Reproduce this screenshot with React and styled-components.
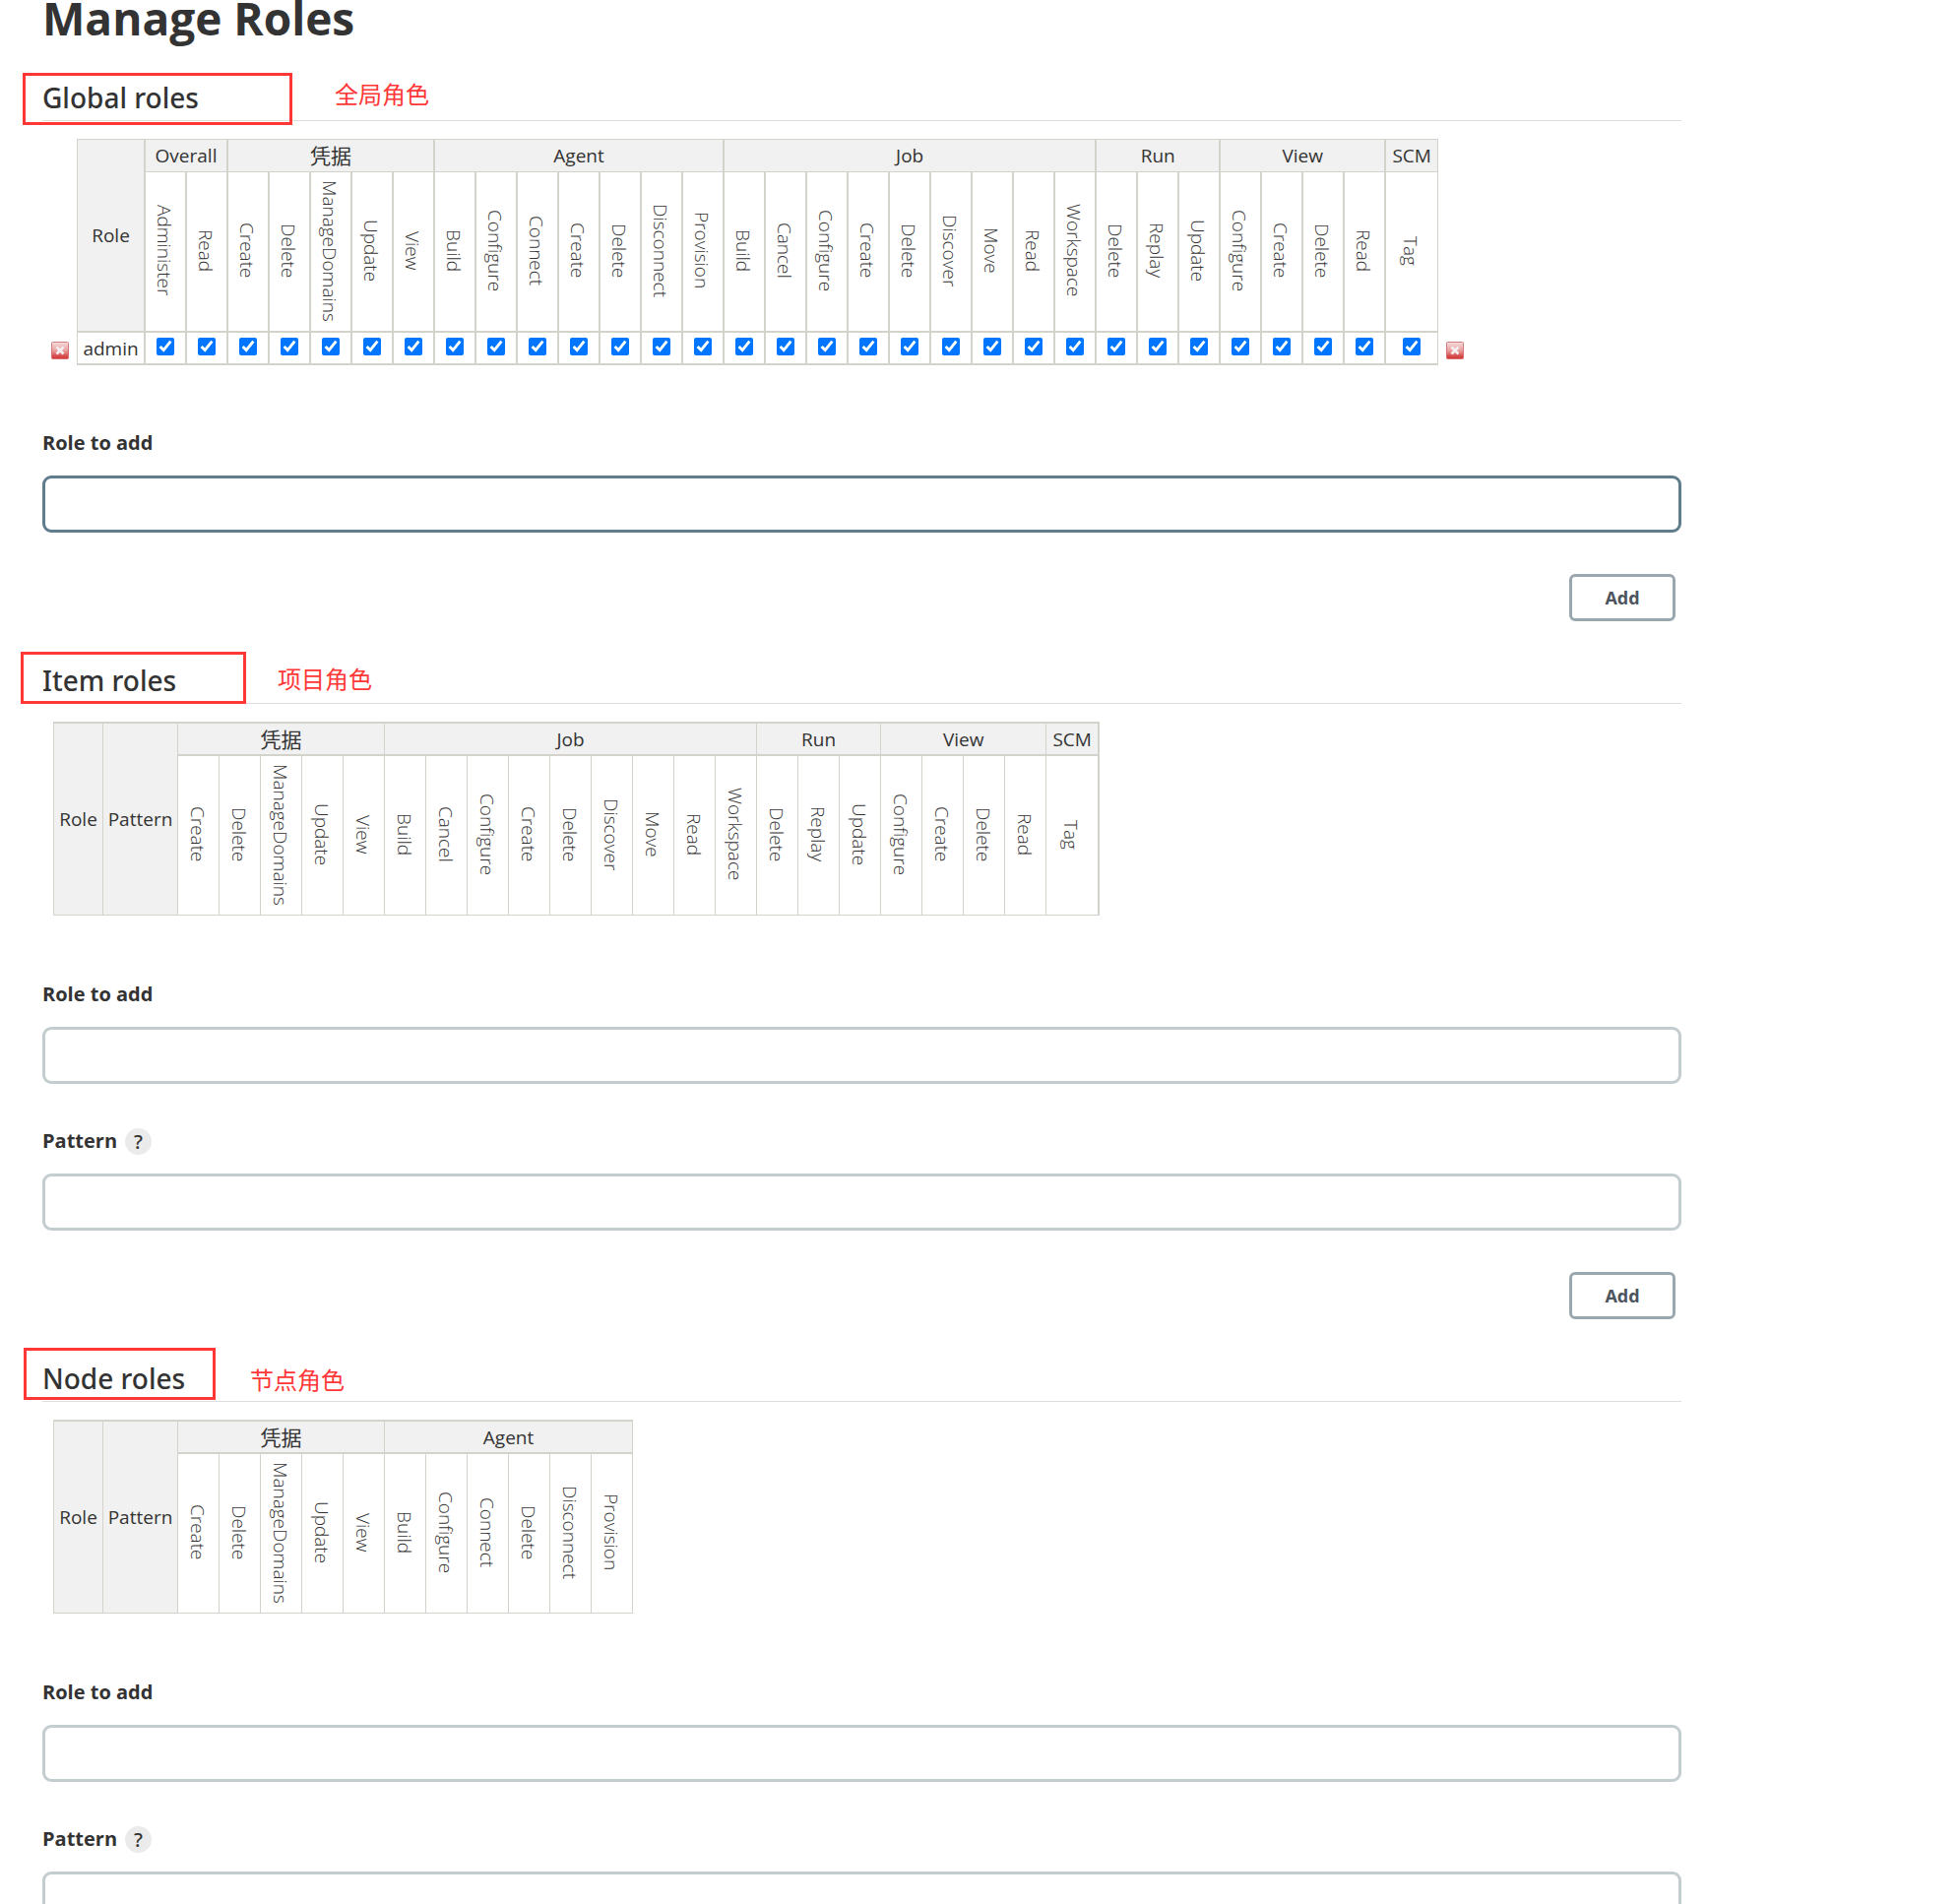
import React, { useState } from 'react';
import styled, { createGlobalStyle } from 'styled-components';

const GlobalStyle = createGlobalStyle`
    :root {
        --text: #333333;
        --line: #d3d3cb;
        --header-bg: #f1f1f1;
        --rule: #dedede;
        --input-border: #c3cccf;
        --input-focus: #607d8b;
        --note: #ff3737;
    }

    * {
        box-sizing: border-box;
    }

    body {
        margin: 0;
        background-color: white;
        color: var(--text);
        font-family: 'Open Sans', 'Noto Sans CJK SC', sans-serif;
        font-size: 19px;
    }
`;

const Page = styled.main`
    height: 100vh;
    overflow: hidden;
    padding: 0 283px 0 43px;
`;

const Title = styled.h1`
    margin: 0 0 45px;
    font-size: 46px;
    line-height: 36px;
    font-weight: 700;
`;

const Section = styled.section`
    margin-bottom: 42px;
`;

const SectionHeader = styled.header`
    position: relative;
    padding-bottom: 5px;
    margin-bottom: 18px;
    border-bottom: 1px solid var(--rule);
`;

const SectionTitle = styled.h2`
    margin: 0;
    font-family: 'Noto Sans', 'Open Sans', sans-serif;
    font-size: 28px;
    line-height: 36px;
    font-weight: 500;
`;

const Marker = styled.div`
    position: absolute;
    left: ${(props) => props.$left}px;
    top: ${(props) => props.$top}px;
    width: ${(props) => props.$width}px;
    height: 53px;
    border: 3px solid var(--note);
    pointer-events: none;
`;

const Note = styled.span`
    position: absolute;
    left: ${(props) => props.$left}px;
    top: ${(props) => props.$top}px;
    color: var(--note);
    font-family: 'Noto Sans CJK SC', sans-serif;
    font-size: 24px;
    line-height: 24px;
    white-space: nowrap;
`;

const Table = styled.table`
    table-layout: fixed;
    width: 1px;
    border-collapse: separate;
    border-spacing: 0;
    margin: ${(props) => (props.$indent ? '0 0 22px 11px' : '0 0 21px')};
`;

const Col = styled.col`
    width: ${(props) => props.$width}px;
`;

const HeaderCell = styled.th`
    height: ${(props) => (props.$thin ? 35 : 34)}px;
    padding: 0;
    background-color: var(--header-bg);
    border: solid var(--line);
    border-width: ${(props) => (props.$thin ? '2px 1px 2px 0' : '1px 2px 1px 0')};
    font-weight: 400;
    line-height: 24px;
    white-space: nowrap;

    &:lang(zh) {
        font-size: 21px;
    }

    &:last-of-type {
        border-right-width: ${(props) => (props.$wideEdge ? 2 : 1)}px;
    }
`;

const RowHeader = styled(HeaderCell)`
    border-left-width: ${(props) => (props.$first ? 1 : 0)}px;
    border-bottom-width: ${(props) => (props.$thin ? 1 : 2)}px;
`;

const PermissionCell = styled.th`
    height: ${(props) => (props.$thin ? 162 : 163)}px;
    padding: 0 2px 2px 0;
    border: solid var(--line);
    border-width: ${(props) => (props.$thin ? '0 1px 1px 0' : '0 2px 2px 0')};
    font-weight: 300;
    vertical-align: middle;

    &:last-child {
        border-right-width: ${(props) => (props.$wideEdge ? 2 : 1)}px;
    }
`;

const VerticalText = styled.span`
    display: inline-block;
    writing-mode: vertical-rl;
    line-height: 24px;
    vertical-align: middle;
`;

const Cell = styled.td`
    height: 33px;
    padding: 0 0 3px;
    border: solid var(--line);
    border-width: 0 ${(props) => (props.$last ? 1 : 2)}px 2px 0;
    text-align: center;
    vertical-align: middle;
`;

const NameCell = styled(Cell)`
    padding: 0;
    border-left-width: 1px;
    line-height: 24px;
`;

const Spacer = styled.td`
    padding: 0;
`;

const DeleteCell = styled.td`
    padding: 3px 8px 0 ${(props) => (props.$start ? 9 : 8)}px;
    vertical-align: middle;
`;

const DeleteButton = styled.button`
    display: block;
    width: 18px;
    height: 18px;
    padding: 0;
    border: none;
    background: none;
    cursor: pointer;

    svg {
        display: block;
    }
`;

const Checkbox = styled.input`
    display: block;
    width: 18px;
    height: 18px;
    margin: 0 auto;
    accent-color: #0075ff;
`;

const Field = styled.div`
    padding-top: 43px;
`;

const LabelRow = styled.div`
    display: flex;
    align-items: center;
    gap: 8px;
    margin-bottom: 18px;
`;

const Label = styled.label`
    font-size: 20px;
    line-height: 30px;
    font-weight: 700;
`;

const HelpButton = styled.button`
    width: 27px;
    height: 27px;
    padding: 0;
    border: none;
    border-radius: 50%;
    background-color: #ebebeb;
    color: var(--text);
    font-family: 'Noto Sans', 'Open Sans', sans-serif;
    font-size: 20px;
    line-height: 27px;
    font-weight: 500;
    cursor: pointer;
`;

const TextInput = styled.input`
    display: block;
    width: 100%;
    height: 58px;
    padding: 0 12px;
    border: 3px solid ${(props) => (props.$active ? 'var(--input-focus)' : 'var(--input-border)')};
    border-radius: 9px;
    background-color: white;
    color: var(--text);
    font-family: inherit;
    font-size: 20px;
    outline: none;

    &:focus {
        border-color: var(--input-focus);
    }
`;

const Actions = styled.div`
    display: flex;
    justify-content: flex-end;
    padding: 42px 6px 0 0;
`;

const AddButton = styled.button`
    width: 108px;
    height: 48px;
    padding: 0;
    border: 3px solid #9aa7ae;
    border-radius: 6px;
    background-color: white;
    color: #4d545d;
    font-family: inherit;
    font-size: 18px;
    font-weight: 700;
    cursor: pointer;
`;

const credentials = {
    name: '凭据',
    lang: 'zh',
    items: ['Create', 'Delete', 'ManageDomains', 'Update', 'View'],
};
const job = {
    name: 'Job',
    items: ['Build', 'Cancel', 'Configure', 'Create', 'Delete', 'Discover', 'Move', 'Read', 'Workspace'],
};
const run = { name: 'Run', items: ['Delete', 'Replay', 'Update'] };
const view = { name: 'View', items: ['Configure', 'Create', 'Delete', 'Read'] };
const scm = { name: 'SCM', items: ['Tag'] };

const globalGroups = [
    { name: 'Overall', items: ['Administer', 'Read'] },
    credentials,
    {
        name: 'Agent',
        items: ['Build', 'Configure', 'Connect', 'Create', 'Delete', 'Disconnect', 'Provision'],
    },
    job,
    run,
    view,
    scm,
];
const itemGroups = [credentials, job, run, view, scm];
const nodeGroups = [
    credentials,
    { name: 'Agent', items: ['Build', 'Configure', 'Connect', 'Delete', 'Disconnect', 'Provision'] },
];

const flatten = (groups) =>
    groups.flatMap((group) => group.items.map((item) => ({ key: `${group.name}/${item}`, item, group: group.name })));

const DeleteIcon = () => (
    <svg width="18" height="18" viewBox="0 0 18 18" aria-hidden="true">
        <defs>
            <linearGradient id="delete-bg" x1="0" y1="0" x2="0" y2="1">
                <stop offset="0" stopColor="#f8dcdc" />
                <stop offset="0.5" stopColor="#e9a0a0" />
                <stop offset="0.85" stopColor="#d64848" />
                <stop offset="1" stopColor="#d03c3c" />
            </linearGradient>
            <linearGradient id="delete-edge" x1="0" y1="0" x2="0" y2="1">
                <stop offset="0" stopColor="#cf7f7f" />
                <stop offset="1" stopColor="#dd6a6a" />
            </linearGradient>
        </defs>
        <rect x="0.5" y="0.5" width="17" height="17" rx="1" fill="url(#delete-bg)" stroke="url(#delete-edge)" />
        <path d="M5.5 5.5l7 7M12.5 5.5l-7 7" stroke="#f3efef" strokeWidth="2.6" />
    </svg>
);

const RemoveRole = ({ role, start }) => (
    <DeleteCell $start={start}>
        <DeleteButton type="button" aria-label={`Delete ${role}`}>
            <DeleteIcon />
        </DeleteButton>
    </DeleteCell>
);

const GlobalTable = () => {
    const permissions = flatten(globalGroups);
    const [checked, setChecked] = useState(() => permissions.map((p) => p.key));

    const toggle = (key) => {
        setChecked((prev) => (prev.includes(key) ? prev.filter((k) => k !== key) : [...prev, key]));
    };

    return (
        <Table>
            <colgroup>
                <Col $width={35} />
                <Col $width={70} />
                {permissions.map((p) => (
                    <Col key={p.key} $width={p.item === 'Tag' ? 53 : 42} />
                ))}
                <Col $width={34} />
            </colgroup>
            <thead>
                <tr>
                    <Spacer rowSpan={2} />
                    <RowHeader $first rowSpan={2}>Role</RowHeader>
                    {globalGroups.map((group) => (
                        <HeaderCell key={group.name} lang={group.lang} colSpan={group.items.length}>
                            {group.name}
                        </HeaderCell>
                    ))}
                </tr>
                <tr>
                    {permissions.map((p) => (
                        <PermissionCell key={p.key}>
                            <VerticalText>{p.item}</VerticalText>
                        </PermissionCell>
                    ))}
                </tr>
            </thead>
            <tbody>
                <tr>
                    <RemoveRole role="admin" start />
                    <NameCell>admin</NameCell>
                    {permissions.map((p, index) => (
                        <Cell key={p.key} $last={index === permissions.length - 1}>
                            <Checkbox
                                type="checkbox"
                                aria-label={`${p.group} ${p.item}`}
                                checked={checked.includes(p.key)}
                                onChange={() => toggle(p.key)}
                            />
                        </Cell>
                    ))}
                    <RemoveRole role="admin" />
                </tr>
            </tbody>
        </Table>
    );
};

const PatternTable = ({ groups, wideEdge }) => {
    const permissions = flatten(groups);

    return (
        <Table $indent>
            <colgroup>
                <Col $width={51} />
                <Col $width={76} />
                {permissions.map((p) => (
                    <Col key={p.key} $width={p.item === 'Tag' ? 54 : 42} />
                ))}
            </colgroup>
            <thead>
                <tr>
                    <RowHeader $thin $first rowSpan={2}>Role</RowHeader>
                    <RowHeader $thin rowSpan={2}>Pattern</RowHeader>
                    {groups.map((group) => (
                        <HeaderCell
                            key={group.name}
                            lang={group.lang}
                            $thin
                            $wideEdge={wideEdge}
                            colSpan={group.items.length}
                        >
                            {group.name}
                        </HeaderCell>
                    ))}
                </tr>
                <tr>
                    {permissions.map((p) => (
                        <PermissionCell key={p.key} $thin $wideEdge={wideEdge}>
                            <VerticalText>{p.item}</VerticalText>
                        </PermissionCell>
                    ))}
                </tr>
            </thead>
        </Table>
    );
};

const TextField = ({ id, label, help, active }) => (
    <Field>
        <LabelRow>
            <Label htmlFor={id}>{label}</Label>
            {help && <HelpButton type="button" aria-label={`Help for ${label}`}>?</HelpButton>}
        </LabelRow>
        <TextInput id={id} type="text" $active={active} />
    </Field>
);

const RoleSection = ({ title, marker, note, children }) => (
    <Section>
        <SectionHeader>
            <SectionTitle>{title}</SectionTitle>
            <Marker $left={marker.left} $top={marker.top} $width={marker.width} />
            <Note $left={note.left} $top={note.top}>{note.text}</Note>
        </SectionHeader>
        {children}
    </Section>
);

const AddRow = () => (
    <Actions>
        <AddButton type="button">Add</AddButton>
    </Actions>
);

const App = () => {
    return (
        <Page>
            <GlobalStyle />
            <Title>Manage Roles</Title>
            <RoleSection
                title="Global roles"
                marker={{ left: -20, top: -7, width: 274 }}
                note={{ left: 297, top: 2, text: '全局角色' }}
            >
                <GlobalTable />
                <TextField id="global-role" label="Role to add" active />
                <AddRow />
            </RoleSection>
            <RoleSection
                title="Item roles"
                marker={{ left: -22, top: -11, width: 229 }}
                note={{ left: 239, top: 4, text: '项目角色' }}
            >
                <PatternTable groups={itemGroups} wideEdge />
                <TextField id="item-role" label="Role to add" />
                <TextField id="item-pattern" label="Pattern" help />
                <AddRow />
            </RoleSection>
            <RoleSection
                title="Node roles"
                marker={{ left: -19, top: -13, width: 195 }}
                note={{ left: 211, top: 7, text: '节点角色' }}
            >
                <PatternTable groups={nodeGroups} />
                <TextField id="node-role" label="Role to add" />
                <TextField id="node-pattern" label="Pattern" help />
            </RoleSection>
        </Page>
    );
};

export default App;
